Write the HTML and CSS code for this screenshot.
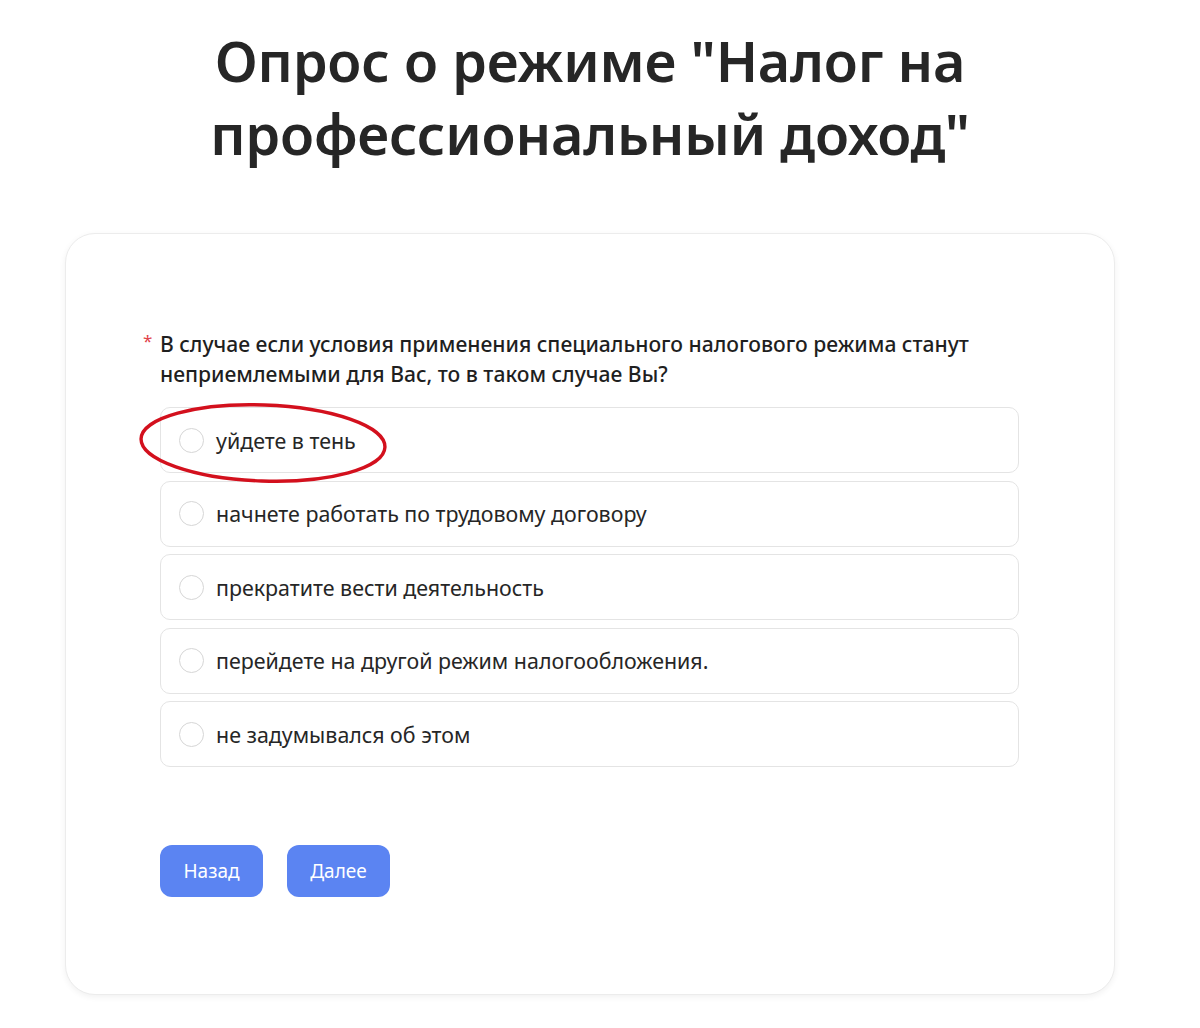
FILE: index.html
```html
<!DOCTYPE html>
<html lang="ru">
<head>
<meta charset="utf-8">
<title>Опрос</title>
<link rel="stylesheet" href="styles.css">
</head>
<body>
<main class="page">
  <h1 class="title">Опрос о режиме "Налог на<br>профессиональный доход"</h1>
  <section class="card">
    <div class="question"><span class="req">*</span>В случае если условия применения специального налогового режима станут неприемлемыми для Вас, то в таком случае Вы?</div>
    <div class="options">
      <label class="option"><span class="radio"></span><span class="opt-text">уйдете в тень</span></label>
      <label class="option"><span class="radio"></span><span class="opt-text">начнете работать по трудовому договору</span></label>
      <label class="option"><span class="radio"></span><span class="opt-text">прекратите вести деятельность</span></label>
      <label class="option"><span class="radio"></span><span class="opt-text">перейдете на другой режим налогообложения.</span></label>
      <label class="option"><span class="radio"></span><span class="opt-text">не задумывался об этом</span></label>
    </div>
    <div class="buttons">
      <button class="btn">Назад</button>
      <button class="btn">Далее</button>
    </div>
    <svg class="mark" width="254" height="86" viewBox="0 0 254 86">
      <ellipse cx="127" cy="43" rx="122" ry="38" fill="none" stroke="#d3101d" stroke-width="3.4" transform="rotate(2 127 43)"/>
    </svg>
  </section>
</main>
</body>
</html>
```
FILE: styles.css
```css
* { box-sizing: border-box; }
html, body { margin: 0; padding: 0; background: #fff; }
body {
  font-family: "Noto Sans", "Open Sans", sans-serif;
  color: #222;
}
.page {
  width: 1050px;
  margin-left: 65px;
  padding-top: 24px;
  padding-bottom: 40px;
}
.title {
  margin: 0;
  font-size: 55.8px;
  line-height: 73px;
  font-weight: 600;
  text-align: center;
  color: #262626;
  letter-spacing: -0.2px;
}
.card {
  position: relative;
  margin-top: 63px;
  height: 762px;
  border: 1px solid #ececec;
  border-radius: 30px;
  box-shadow: 0 2px 6px rgba(0,0,0,0.06);
  padding: 95px 95px 0 94px;
  background: #fff;
}
.question {
  position: relative;
  font-size: 21.1px;
  line-height: 30px;
  font-weight: 500;
  color: #1f1f1f;
}
.req {
  position: absolute;
  left: -17px;
  top: -3px;
  color: #e1434a;
  font-size: 17px;
  font-weight: 400;
}
.options {
  margin-top: 18px;
  display: flex;
  flex-direction: column;
  gap: 7.5px;
}
.option {
  height: 66px;
  border: 1px solid #e4e4e4;
  border-radius: 10px;
  display: flex;
  align-items: center;
  padding-left: 18px;
  gap: 12px;
  font-size: 21.4px;
  color: #262626;
}
.radio {
  width: 25px;
  height: 25px;
  border-radius: 50%;
  border: 1.5px solid #d6d6d6;
  flex: none;
}
.buttons {
  margin-top: 78px;
  display: flex;
  gap: 24px;
}
.btn {
  height: 52px;
  width: 103px;
  border: none;
  border-radius: 12px;
  background: #5b84f2;
  color: #fff;
  font-family: inherit;
  font-size: 19px;
  font-weight: 400;
}
.mark {
  position: absolute;
  left: 70px;
  top: 166px;
  pointer-events: none;
}
```
